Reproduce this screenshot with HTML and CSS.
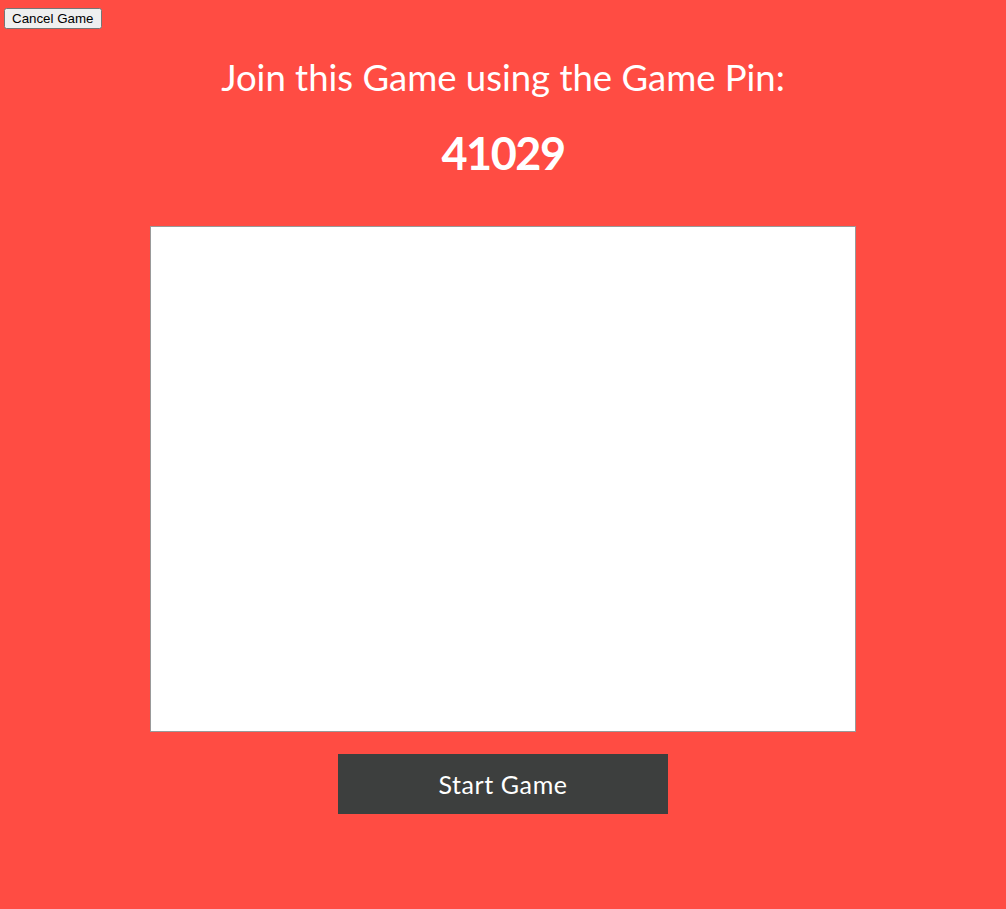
FILE: index.html
```html
<!DOCTYPE html>
<html>
<head>
<meta charset="utf-8">
<link rel="stylesheet" href="styles.css">
</head>
<body>
<div class="topbar"><button class="cancel">Cancel Game</button></div>
<main class="lobby">
  <h1 class="title">Join this Game using the Game Pin:</h1>
  <div class="pin">41029</div>
  <div class="players"></div>
  <button class="start">Start Game</button>
</main>
</body>
</html>
```
FILE: styles.css
```css
html, body {
  margin: 0;
  background: #ff4c43;
  height: 100%;
}
body {
  font-family: Lato, "Open Sans", sans-serif;
  color: #fff;
}
.topbar {
  padding: 8px 4px 0;
  height: 21px;
}
.cancel {
  display: block;
  font-family: "Liberation Sans", Arial, sans-serif;
  font-size: 13.333px;
  height: 21px;
  padding: 1px 6px;
  margin: 0;
}
.lobby {
  display: flex;
  flex-direction: column;
  align-items: center;
}
.title {
  margin: 28px 0 0;
  font-size: 36.5px;
  font-weight: 400;
  line-height: 40px;
}
.pin {
  margin-top: 31px;
  font-size: 45px;
  font-weight: 700;
  line-height: 50px;
  letter-spacing: -1.5px;
}
.players {
  margin-top: 48px;
  width: 704px;
  height: 504px;
  background: #fff;
  border: 1px solid #999;
}
.start {
  margin-top: 22px;
  width: 330px;
  height: 60px;
  border: none;
  background: #3d3f3e;
  color: #fff;
  font-family: Lato, "Open Sans", sans-serif;
  font-size: 25px;
  letter-spacing: 0.6px;
  padding: 0;
}
```
